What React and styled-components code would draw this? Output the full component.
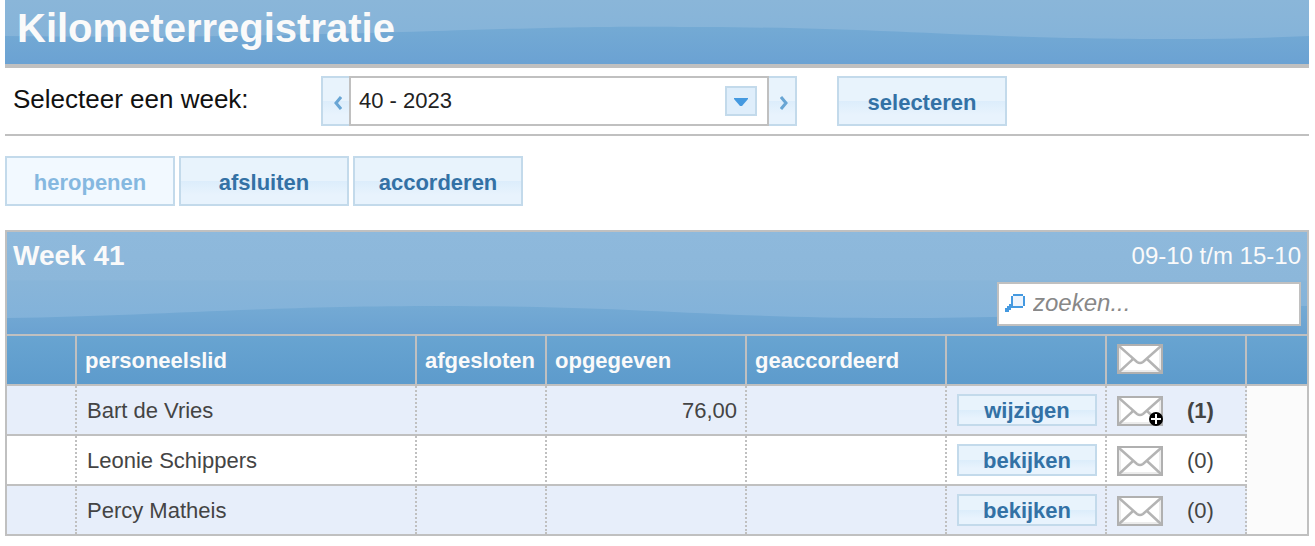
import React, { useState } from "react";

import styled, { createGlobalStyle } from "styled-components";

const weeks = ["39 - 2023", "40 - 2023", "41 - 2023"];

const staff = [
  { name: "Bart de Vries", km: "76,00", action: "wijzigen", mails: 1 },
  { name: "Leonie Schippers", km: "", action: "bekijken", mails: 0 },
  { name: "Percy Matheis", km: "", action: "bekijken", mails: 0 },
];

function Mail({ plus }) {
  return (
    <MailIcon viewBox="0 0 46 30" aria-hidden="true">
      <rect x="1" y="1" width="44" height="28" fill="#fff" stroke="#b0b0b0" strokeWidth="2" />
      <path d="M3 3V27H43V3" fill="none" stroke="#ececec" strokeWidth="2" />
      <path
        d="M2 2L20 18Q23 20 26 18L44 2M2 28L16 15M44 28L30 15"
        fill="none"
        stroke="#b4b4b4"
        strokeWidth="2.5"
      />
      {plus && (
        <>
          <circle cx="39" cy="23" r="7" fill="#000" />
          <path d="M34 23H44M39 18V28" stroke="#fff" strokeWidth="2" />
        </>
      )}
    </MailIcon>
  );
}

function App() {
  const [week, setWeek] = useState(1);
  const [search, setSearch] = useState("");

  const rows = staff.filter((p) =>
    p.name.toLowerCase().includes(search.toLowerCase())
  );

  return (
    <Page>
      <GlobalStyle />
      <TitleBar>
        <Wave viewBox="0 0 1304 64" preserveAspectRatio="none" aria-hidden="true">
          <defs>
            <linearGradient id="titleWave" x1="0" y1="0" x2="0" y2="1">
              <stop offset="0" stopColor="#74aad4" />
              <stop offset="1" stopColor="#6ba2d3" />
            </linearGradient>
          </defs>
          <path
            d="M0 36C170 38 300 35 430 31S600 26 700 27C900 28 960 39 1170 39Q1240 39 1304 36V64H0Z"
            fill="url(#titleWave)"
          />
        </Wave>
        <Title>Kilometerregistratie</Title>
      </TitleBar>

      <WeekBar>
        <WeekLabel htmlFor="week">Selecteer een week:</WeekLabel>
        <StepButton
          $side="left"
          aria-label="vorige week"
          onClick={() => setWeek(Math.max(0, week - 1))}
        >
          <Chevron viewBox="0 0 8 14">
            <path d="M7 1L2 7L7 13" />
          </Chevron>
        </StepButton>
        <SelectBox>
          <WeekSelect
            id="week"
            value={week}
            onChange={(e) => setWeek(Number(e.target.value))}
          >
            {weeks.map((w, i) => (
              <option key={w} value={i}>
                {w}
              </option>
            ))}
          </WeekSelect>
          <Caret>
            <svg width="14" height="8" viewBox="0 0 14 8">
              <path d="M0 0H14V1L8 8H6L0 1Z" fill="#4499e0" />
            </svg>
          </Caret>
        </SelectBox>
        <StepButton
          $side="right"
          aria-label="volgende week"
          onClick={() => setWeek(Math.min(weeks.length - 1, week + 1))}
        >
          <Chevron viewBox="0 0 8 14">
            <path d="M1 1L6 7L1 13" />
          </Chevron>
        </StepButton>
        <SelectAction>selecteren</SelectAction>
      </WeekBar>

      <Actions>
        <Button disabled>heropenen</Button>
        <Button>afsluiten</Button>
        <Button>accorderen</Button>
      </Actions>

      <Panel>
        <PanelHead>
          <Wave viewBox="0 0 1300 102" preserveAspectRatio="none" aria-hidden="true">
            <defs>
              <linearGradient id="panelWave" x1="0" y1="0" x2="0" y2="1">
                <stop offset="0" stopColor="#74aad4" />
                <stop offset="1" stopColor="#6ba2d1" />
              </linearGradient>
            </defs>
            <path
              d="M0 86C150 84 250 74 434 74C640 74 700 86 890 86C1080 86 1150 74 1300 74V102H0Z"
              fill="url(#panelWave)"
            />
          </Wave>
          <PanelTop>
            <WeekTitle>Week 41</WeekTitle>
            <Period>09-10 t/m 15-10</Period>
          </PanelTop>
          <SearchBox>
            <svg width="20" height="18" viewBox="0 0 20 18" aria-hidden="true">
              <path d="M0 18V14H2V12H4V10H6V8H9V11H11V14H6V16H4V18Z" fill="#4499e0" />
              <path d="M8 0H18V2H20V12H18V14H8V12H6V2H8Z" fill="#4499e0" />
              <rect x="8" y="2" width="10" height="10" fill="#eef4fc" />
            </svg>
            <SearchInput
              type="text"
              aria-label="zoeken"
              placeholder="zoeken..."
              value={search}
              onChange={(e) => setSearch(e.target.value)}
            />
          </SearchBox>
        </PanelHead>

        <Table>
          <colgroup>
            <Col $w={70} />
            <Col $w={340} />
            <Col $w={130} />
            <Col $w={200} />
            <Col $w={200} />
            <Col $w={160} />
            <Col $w={140} />
            <col />
          </colgroup>
          <thead>
            <tr>
              <Th />
              <Th>personeelslid</Th>
              <Th>afgesloten</Th>
              <Th>opgegeven</Th>
              <Th>geaccordeerd</Th>
              <Th />
              <Th>
                <MailCell>
                  <Mail />
                </MailCell>
              </Th>
              <Th />
            </tr>
          </thead>
          <tbody>
            {rows.map((p, i) => (
              <Row key={p.name}>
                <Td />
                <Td>{p.name}</Td>
                <Td />
                <Td $right>{p.km}</Td>
                <Td />
                <ActionTd>
                  <RowButton>{p.action}</RowButton>
                </ActionTd>
                <Td>
                  <MailCell>
                    <Mail plus={p.mails > 0} />
                    <Count $bold={p.mails > 0}>({p.mails})</Count>
                  </MailCell>
                </Td>
                {i === 0 && <Filler rowSpan={rows.length} />}
              </Row>
            ))}
          </tbody>
        </Table>
      </Panel>
    </Page>
  );
}

const GlobalStyle = createGlobalStyle`
  * {
    box-sizing: border-box;
  }

  body {
    margin: 0;
    background: #fff;
    font-family: "Liberation Sans", Arial, sans-serif;
  }

  button, input, select {
    font-family: inherit;
  }
`;

const Page = styled.div`
  margin: 0 6px 0 5px;
`;

const TitleBar = styled.header`
  position: relative;
  padding: 5px 12px 13px;
  border-bottom: 4px solid #c0c0c0;
  background: linear-gradient(#8ab6d9, #86b4d9 50%, #80b0da);
`;

const Wave = styled.svg`
  position: absolute;
  top: 0;
  left: 0;
  width: 100%;
  height: 100%;
`;

const Title = styled.h1`
  position: relative;
  margin: 0;
  font-size: 40px;
  line-height: 46px;
  color: #fafafa;
`;

const WeekBar = styled.div`
  display: flex;
  padding: 8px 0;
  border-bottom: 2px solid #c0c0c0;
`;

const WeekLabel = styled.label`
  width: 316px;
  padding-left: 8px;
  font-size: 26px;
  line-height: 46px;
  color: #111;
`;

const Button = styled.button`
  width: 170px;
  height: 50px;
  padding: 4px 0 0;
  border: 2px solid #c3daeb;
  background: linear-gradient(#e8f3fc 49%, #dcedfb 50%, #e8f3fd 80%);
  font-size: 22px;
  font-weight: bold;
  color: #3371a5;

  &:disabled {
    background: #f2f9ff;
    color: #85b8e0;
  }
`;

const SelectAction = styled(Button)`
  margin-left: 40px;
`;

const StepButton = styled(Button)`
  display: flex;
  align-items: center;
  justify-content: center;
  width: 28px;
  padding-left: 4px;
  border-${(props) => (props.$side === "left" ? "right" : "left")}: none;
`;

const Chevron = styled.svg`
  width: 8px;
  height: 14px;
  fill: none;
  stroke: #68a5d4;
  stroke-width: 3px;
`;

const SelectBox = styled.div`
  position: relative;
  width: 420px;
`;

const WeekSelect = styled.select`
  appearance: none;
  width: 100%;
  height: 50px;
  padding: 0 48px 2px 8px;
  border: 2px solid #c0c0c0;
  border-radius: 0;
  background: #fff;
  font-size: 22px;
  color: #222;
`;

const Caret = styled.span`
  position: absolute;
  top: 10px;
  right: 12px;
  display: flex;
  align-items: center;
  justify-content: center;
  width: 32px;
  height: 30px;
  padding-top: 2px;
  border: 2px solid #c3daeb;
  background: #dfeefb;
  pointer-events: none;
`;

const Actions = styled.div`
  display: flex;
  gap: 4px;
  padding: 20px 0 24px;
`;

const Panel = styled.section`
  border: 2px solid #c0c0c0;
`;

const PanelHead = styled.div`
  position: relative;
  display: flex;
  flex-direction: column;
  gap: 10px;
  padding: 8px 6px;
  background: linear-gradient(#8eb9dc, #8cb7da 47%, #88b5d9 48%, #80b1da);
`;

const PanelTop = styled.div`
  position: relative;
  display: flex;
  justify-content: space-between;
  line-height: 32px;
  color: #fafafa;
`;

const WeekTitle = styled.h2`
  margin: 0;
  font-size: 28px;
`;

const Period = styled.span`
  font-size: 24px;
`;

const SearchBox = styled.div`
  position: relative;
  display: flex;
  align-items: center;
  align-self: flex-end;
  gap: 8px;
  width: 304px;
  height: 44px;
  padding: 0 6px 2px;
  border: 2px solid #c0c0c0;
  background: #fff;
`;

const SearchInput = styled.input`
  flex: 1;
  min-width: 0;
  height: 38px;
  padding: 0;
  border: none;
  outline: none;
  background: none;
  font-size: 24px;
  font-style: italic;

  &::placeholder {
    color: #888;
  }
`;

const Table = styled.table`
  width: 100%;
  table-layout: fixed;
  border-collapse: separate;
  border-spacing: 0;
  font-size: 22px;
  color: #444;
`;

const Col = styled.col`
  width: ${(props) => props.$w}px;
`;

const Th = styled.th`
  height: 52px;
  padding: 2px 8px 0;
  border-top: 2px solid #c0c0c0;
  border-bottom: 2px solid #c0c0c0;
  border-right: 2px solid #c0c0c0;
  background: linear-gradient(#68a4d1, #5d9bcc);
  text-align: left;
  color: #fafafa;

  &:last-child {
    border-right: none;
  }
`;

const Td = styled.td`
  height: 50px;
  padding: 2px 8px 0 10px;
  border-bottom: 2px solid #c0c0c0;
  border-right: 2px dotted #c0c0c0;
  text-align: ${(props) => (props.$right ? "right" : "left")};
`;

const ActionTd = styled(Td)`
  padding-top: 0;
`;

const Filler = styled.td`
  background: #fbfbfb;
`;

const Row = styled.tr`
  background: #fff;

  &:nth-child(odd) {
    background: #e7eefa;
  }

  &:last-child ${Td} {
    height: 48px;
    border-bottom: none;
  }
`;

const RowButton = styled(Button)`
  display: block;
  width: 140px;
  height: 32px;
  padding: 2px 0 0;
`;

const MailCell = styled.div`
  display: flex;
  align-items: center;
  gap: 24px;

  th & {
    padding: 0 0 4px 2px;
  }
`;

const MailIcon = styled.svg`
  width: 46px;
  height: 30px;
`;

const Count = styled.span`
  font-weight: ${(props) => (props.$bold ? "bold" : "normal")};
`;

export default App;
